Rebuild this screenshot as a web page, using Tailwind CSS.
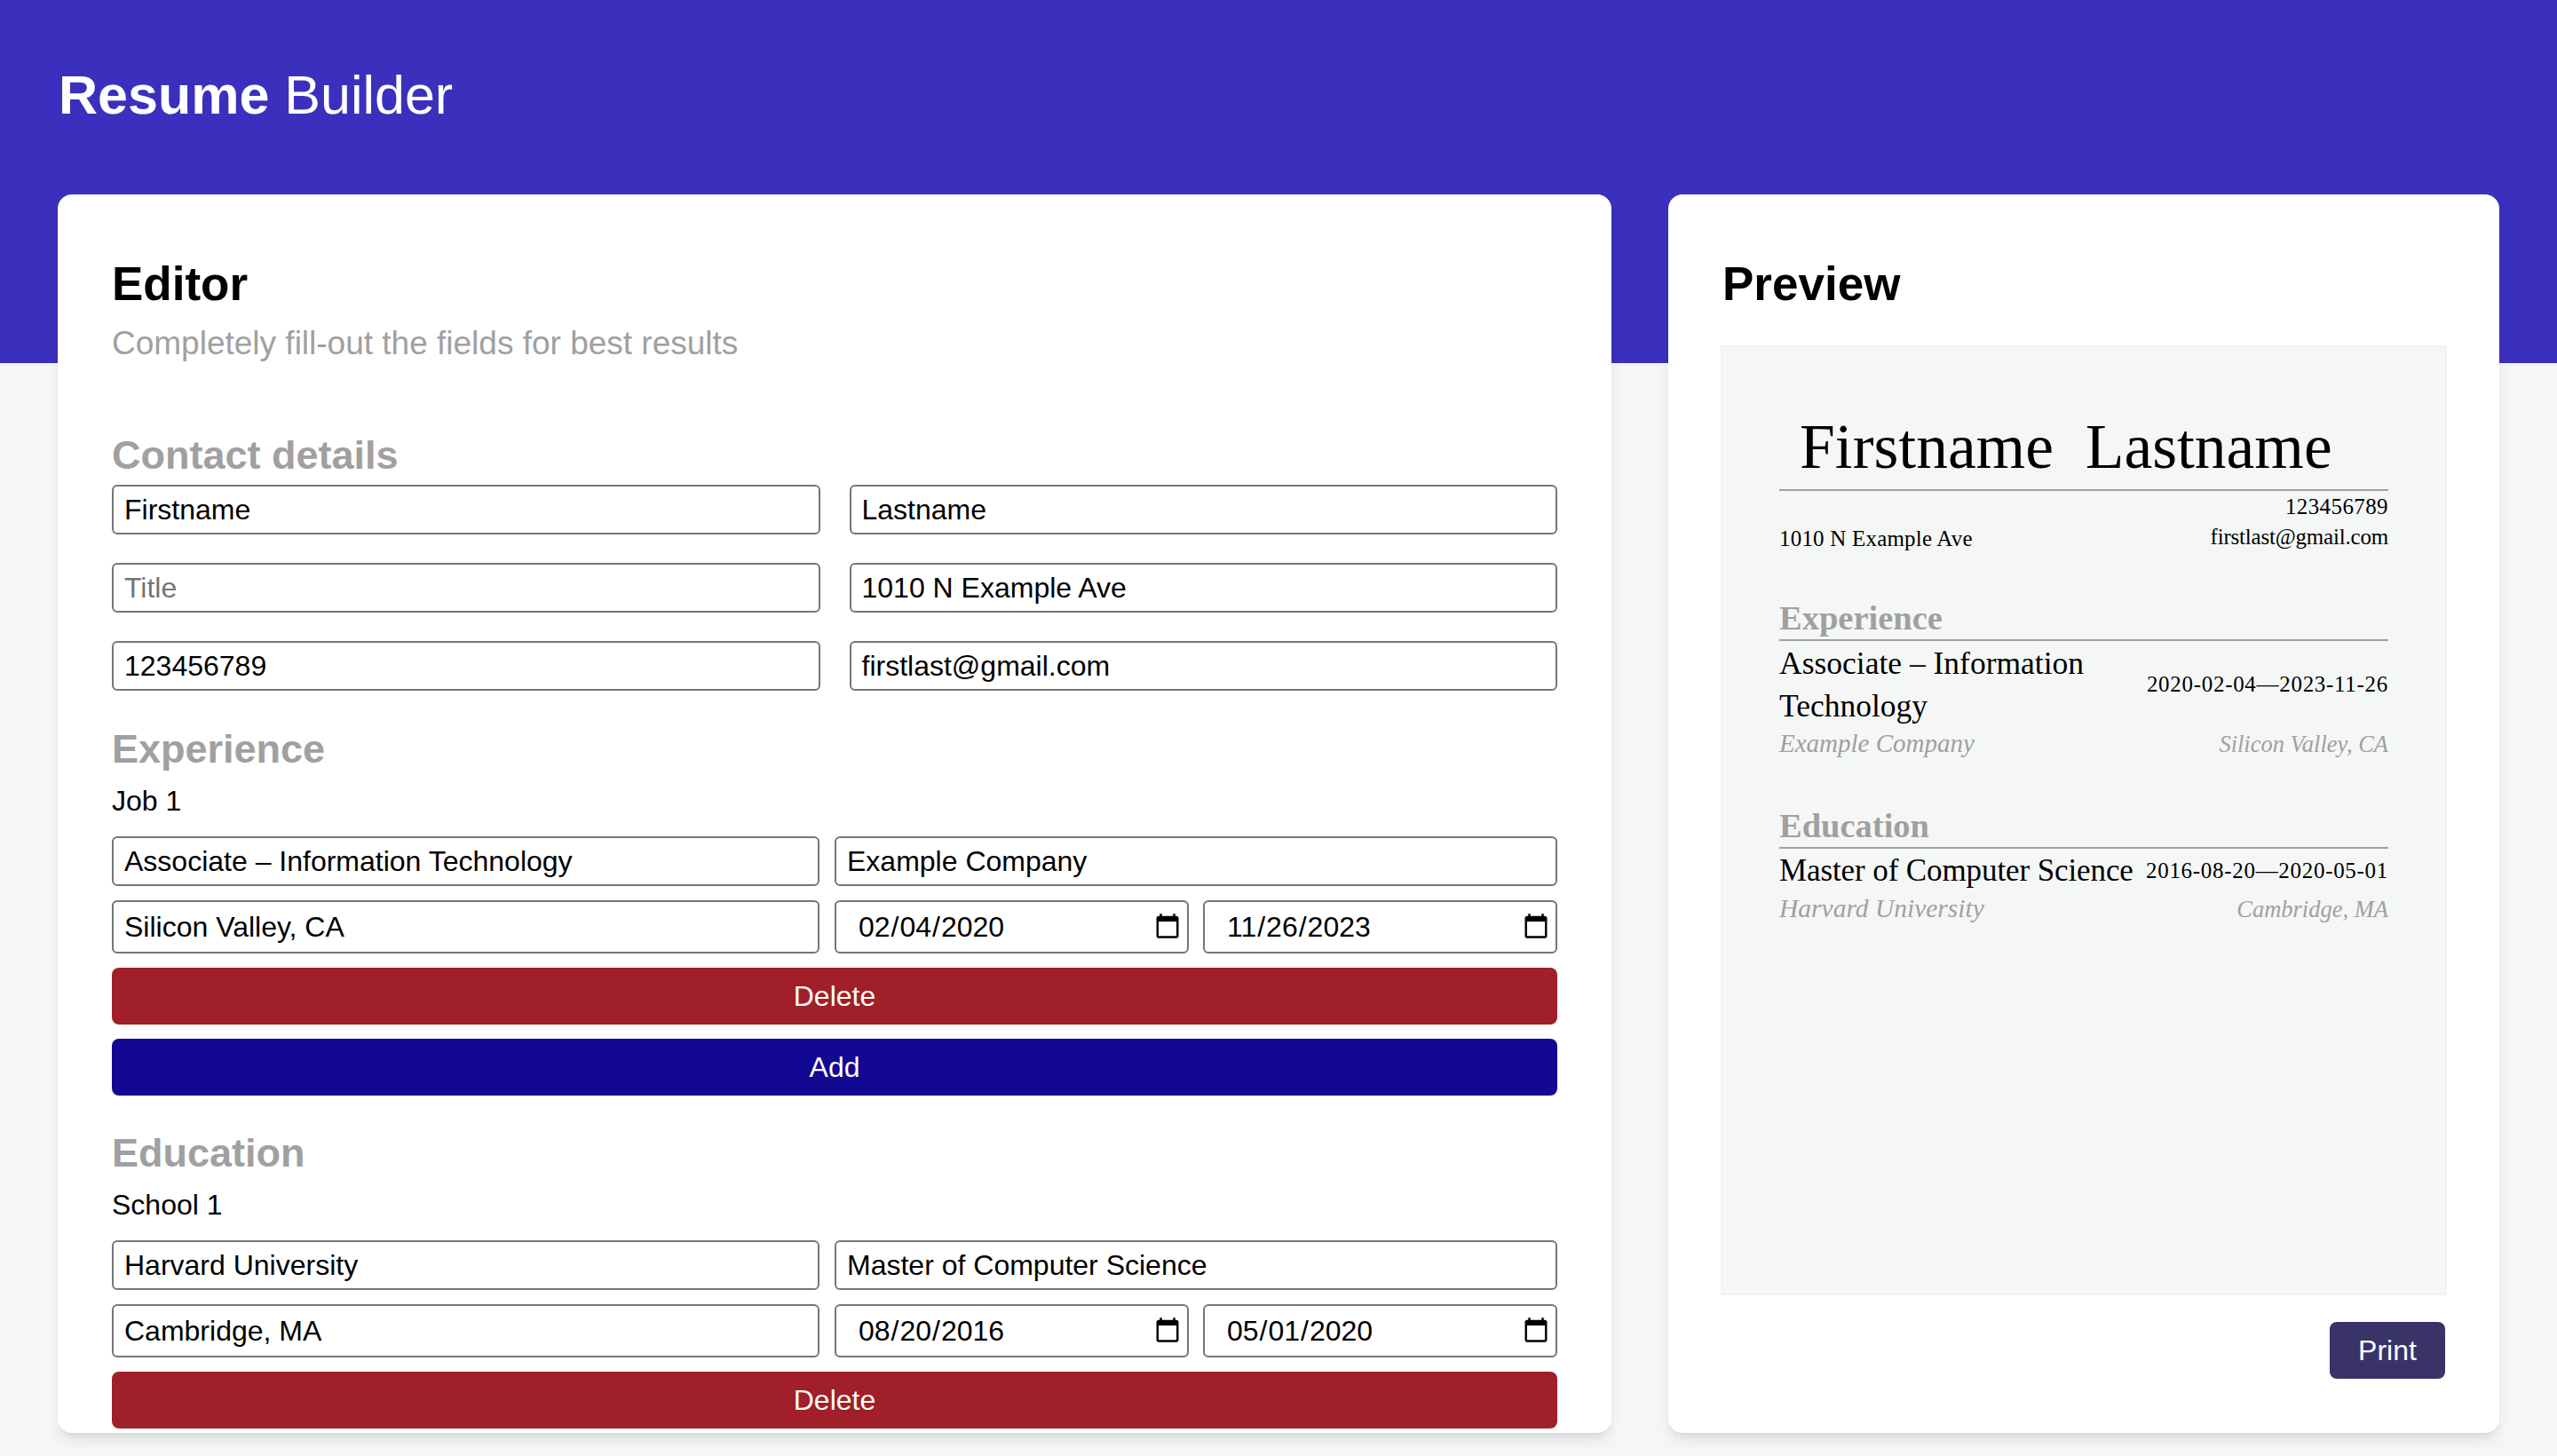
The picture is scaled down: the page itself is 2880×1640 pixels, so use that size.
<!DOCTYPE html>
<html lang="en">

<head>
    <meta charset="UTF-8">
    <meta name="viewport" content="width=device-width, initial-scale=1.0">
    <title>Resume Builder</title>
    <script src="https://cdn.jsdelivr.net/npm/@tailwindcss/browser@4"></script>
</head>

<body class="h-[1640px] overflow-hidden bg-[#f5f7f6] [font-family:'Liberation_Sans',Arial,sans-serif] text-black">

    <header class="h-[409px] bg-[#3b30bd] pl-[66px] pt-[72px] text-[61px] leading-[70px] text-white">
        <span class="font-bold">Resume</span> Builder
    </header>

    <main class="mt-[-190px] flex gap-[64px] px-[65px]">

        <section class="h-[1395px] w-[1750px] overflow-hidden rounded-2xl bg-white px-[61px] pt-[71px] shadow-lg">
            <h1 class="text-[53px] font-bold leading-[60px]">Editor</h1>
            <p class="mt-[15px] text-[37px] leading-[44px] text-[#a0a0a0]">Completely fill-out the fields for best results</p>

            <h2 class="mt-[78px] mb-[7px] text-[45px] font-bold leading-[52px] text-[#a0a0a0]">Contact details</h2>
            <div class="grid grid-cols-2 gap-x-[33px] gap-y-[32px]">
                <input class="h-[56px] w-full rounded-md border-2 border-[#767676] px-[12px] text-[32px]" value="Firstname">
                <input class="h-[56px] w-full rounded-md border-2 border-[#767676] px-[12px] text-[32px]" value="Lastname">
                <input class="h-[56px] w-full rounded-md border-2 border-[#767676] px-[12px] text-[32px] placeholder:text-[#757575]" placeholder="Title">
                <input class="h-[56px] w-full rounded-md border-2 border-[#767676] px-[12px] text-[32px]" value="1010 N Example Ave">
                <input class="h-[56px] w-full rounded-md border-2 border-[#767676] px-[12px] text-[32px]" value="123456789">
                <input class="h-[56px] w-full rounded-md border-2 border-[#767676] px-[12px] text-[32px]" value="firstlast@gmail.com">
            </div>

            <h2 class="mt-[40px] text-[45px] font-bold leading-[52px] text-[#a0a0a0]">Experience</h2>
            <p class="mt-[12px] text-[32px] leading-[40px]">Job 1</p>
            <div class="mt-[20px] grid grid-cols-[797px_1fr] gap-x-[17px] gap-y-[16px]">
                <input class="h-[56px] w-full rounded-md border-2 border-[#767676] px-[12px] text-[32px]" value="Associate – Information Technology">
                <input class="h-[56px] w-full rounded-md border-2 border-[#767676] px-[12px] text-[32px]" value="Example Company">
                <input class="h-[60px] w-full rounded-md border-2 border-[#767676] px-[12px] text-[32px]" value="Silicon Valley, CA">
                <div class="grid grid-cols-2 gap-x-[16px]">
                    <input type="date" class="h-[60px] w-full rounded-md border-2 border-[#767676] pl-[24px] pr-[4px] text-[32px]" value="2020-02-04">
                    <input type="date" class="h-[60px] w-full rounded-md border-2 border-[#767676] pl-[24px] pr-[4px] text-[32px]" value="2023-11-26">
                </div>
            </div>
            <button class="mt-[16px] block h-[64px] w-full rounded-lg bg-[#a01f28] text-[32px] text-white">Delete</button>
            <button class="mt-[16px] block h-[64px] w-full rounded-lg bg-[#130892] text-[32px] text-white">Add</button>

            <h2 class="mt-[39px] text-[45px] font-bold leading-[52px] text-[#a0a0a0]">Education</h2>
            <p class="mt-[12px] text-[32px] leading-[40px]">School 1</p>
            <div class="mt-[20px] grid grid-cols-[797px_1fr] gap-x-[17px] gap-y-[16px]">
                <input class="h-[56px] w-full rounded-md border-2 border-[#767676] px-[12px] text-[32px]" value="Harvard University">
                <input class="h-[56px] w-full rounded-md border-2 border-[#767676] px-[12px] text-[32px]" value="Master of Computer Science">
                <input class="h-[60px] w-full rounded-md border-2 border-[#767676] px-[12px] text-[32px]" value="Cambridge, MA">
                <div class="grid grid-cols-2 gap-x-[16px]">
                    <input type="date" class="h-[60px] w-full rounded-md border-2 border-[#767676] pl-[24px] pr-[4px] text-[32px]" value="2016-08-20">
                    <input type="date" class="h-[60px] w-full rounded-md border-2 border-[#767676] pl-[24px] pr-[4px] text-[32px]" value="2020-05-01">
                </div>
            </div>
            <button class="mt-[16px] block h-[64px] w-full rounded-lg bg-[#a01f28] text-[32px] text-white">Delete</button>
        </section>

        <section class="h-[1395px] w-[936px] rounded-2xl bg-white px-[59px] pt-[71px] shadow-lg">
            <h1 class="ml-[2px] text-[53px] font-bold leading-[60px]">Preview</h1>

            <div class="mt-[39px] h-[1070px] border-2 border-[#f1f3f2] bg-[#f5f7f6] px-[64px] pt-[76px] [font-family:'Liberation_Serif','Times_New_Roman',serif]">
                <div class="whitespace-pre border-b-2 border-[#a0a0a0] pb-[12px] pl-[23px] text-[71.5px] leading-[72px]">Firstname  Lastname</div>
                <div class="flex items-end justify-between pt-[1px] text-[25px] leading-[34px]">
                    <span class="mb-[-2px] tracking-[0.2px]">1010 N Example Ave</span>
                    <span class="text-right"><span class="tracking-[0.4px]">123456789</span><br><span class="tracking-[-0.2px]">firstlast@gmail.com</span></span>
                </div>

                <h3 class="mt-[52px] border-b-2 border-[#a0a0a0] pb-[2px] text-[38.5px] font-bold leading-[44px] text-[#a0a0a0]">Experience</h3>
                <div class="flex items-center justify-between pt-[1px]">
                    <span class="w-[380px] text-[35.5px] leading-[48px]">Associate – Information Technology</span>
                    <span class="text-[25px] tracking-[0.7px]">2020-02-04—2023-11-26</span>
                </div>
                <div class="flex items-baseline justify-between pt-[1px] italic leading-[34px] text-[#a0a0a0]">
                    <span class="text-[29px]">Example Company</span>
                    <span class="text-[26.5px]">Silicon Valley, CA</span>
                </div>

                <h3 class="mt-[53px] border-b-2 border-[#a0a0a0] pb-[2px] text-[38.5px] font-bold leading-[44px] text-[#a0a0a0]">Education</h3>
                <div class="flex items-center justify-between pt-[1px]">
                    <span class="text-[35px] leading-[48px] tracking-[-0.1px]">Master of Computer Science</span>
                    <span class="text-[25px] tracking-[0.7px]">2016-08-20—2020-05-01</span>
                </div>
                <div class="flex items-baseline justify-between pt-[1px] italic leading-[34px] text-[#a0a0a0]">
                    <span class="text-[29.5px]">Harvard University</span>
                    <span class="text-[26.5px]">Cambridge, MA</span>
                </div>
            </div>

            <div class="mt-[30px] flex justify-end pr-[2px]">
                <button class="h-[64px] w-[130px] rounded-lg bg-[#3a3368] text-[32px] text-white">Print</button>
            </div>
        </section>

    </main>

</body>

</html>
